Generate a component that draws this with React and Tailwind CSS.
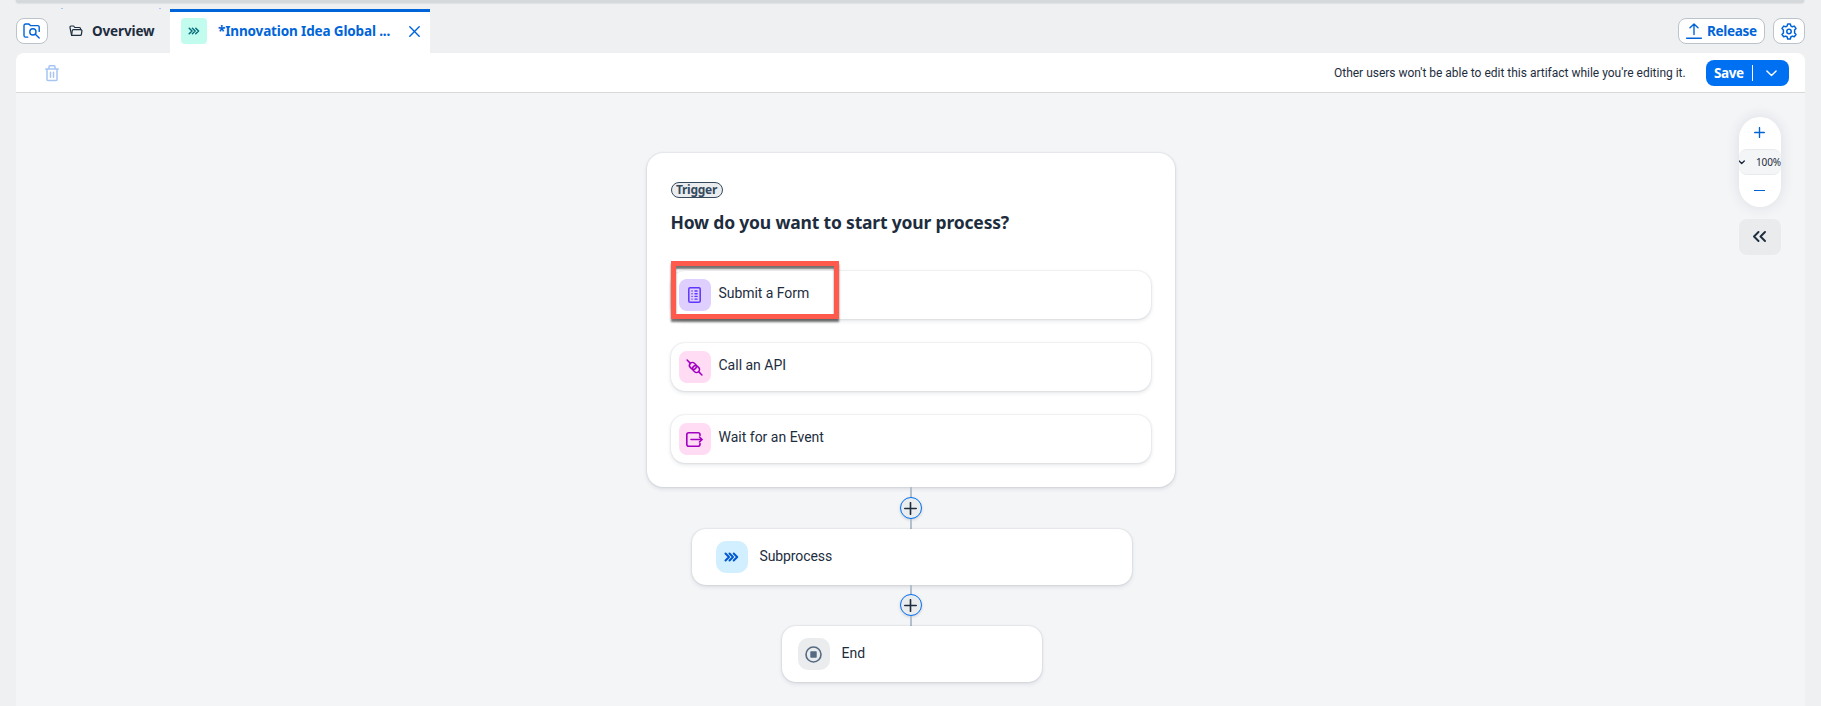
const stroke = {
  fill: "none",
  stroke: "currentColor",
  strokeLinecap: "round",
  strokeLinejoin: "round",
};

function FolderSearchIcon() {
  return (
    <svg width="18" height="18" viewBox="0 0 18 18" {...stroke} strokeWidth="1.4">
      <path d="M4.800 15.100H2.600a1.600 1.600 0 0 1-1.600-1.600V3.600A1.600 1.600 0 0 1 2.600 2h2.800c.6 0 1 .3 1.400.8l.6.8h7.200a1.600 1.600 0 0 1 1.600 1.600v4.200" />
      <circle cx="9.900" cy="9.900" r="3.100" />
      <path d="M12.300 12.200l3.900 3.900" />
    </svg>
  );
}

function FolderOpenIcon() {
  return (
    <svg width="14" height="12" viewBox="0 0 14 12" {...stroke} strokeWidth="1.200">
      <path d="M2.600 10.400L1 2.600C.9 1.600 1.300 1 2.200 1h2.400l1.200 1.500h4.600c.7 0 1.100.4 1.100 1.100v1" />
      <path d="M2.600 10.400l.6-4.600c.1-.7.5-1.100 1.200-1.100h7.400c.8 0 1.200.5 1.100 1.200l-.5 3.500c-.1.700-.5 1-1.200 1z" />
    </svg>
  );
}

function ChevronsIcon({ className, weight }) {
  return (
    <svg className={className} viewBox="0 0 15 10" {...stroke} strokeWidth={weight}>
      <path d="M1.500 1.500L5 5 1.500 8.500M5.500 1.500L9 5 5.500 8.500M9.700 1.500L13.200 5 9.700 8.500" />
    </svg>
  );
}

function TrashIcon() {
  return (
    <svg width="14" height="17" viewBox="0 0 14 17" {...stroke} strokeWidth="1.500">
      <path d="M.7 4h12.600M4 4V1.700c0-.6.300-.9.900-.9h4.200c.6 0 .9.300.9.900V4M2 4v10.400c0 .8.400 1.200 1.200 1.200h7.600c.8 0 1.200-.4 1.200-1.200V4M5.500 7.300v5M8.500 7.300v5" />
    </svg>
  );
}

function CloseIcon() {
  return (
    <svg width="11" height="11" viewBox="0 0 11 11" {...stroke} strokeWidth="1.400">
      <path d="M.8.8l9.400 9.400M10.200.8L.8 10.200" />
    </svg>
  );
}

function UploadIcon() {
  return (
    <svg width="16" height="16" viewBox="0 0 16 16" {...stroke} strokeWidth="1.400">
      <path d="M8 11.500V.9M4 4.800L8 .9l4 3.900" />
      <path d="M.7 15.200h14.600" strokeWidth="1.500" />
    </svg>
  );
}

function GearIcon() {
  return (
    <svg width="16" height="17" viewBox="0 0 16 17" {...stroke} strokeWidth="1.500">
      <path d="M6.700.9h2.600l.5 2 1.500.9 2-.7 1.700 2.300-1.400 1.600v2.900l1.400 1.600-1.700 2.300-2-.7-1.500.9-.5 2.100H6.700l-.5-2.100-1.500-.9-2 .7L1 11.500l1.400-1.600V7L1 5.400l1.700-2.300 2 .7 1.500-.9z" />
      <circle cx="8" cy="8.500" r="2.200" />
    </svg>
  );
}

function FormIcon() {
  return (
    <svg width="13" height="16" viewBox="0 0 13 16" {...stroke} strokeWidth="1.500">
      <rect x=".8" y=".8" width="11.400" height="14.400" rx="1.300" />
      <path d="M4 4h.1M4 6.700h.1M4 9.400h.1M4 12.100h.1M7 4h2.100M7 6.700h2.100M7 9.400h2.100M7 12.100h2.100" strokeWidth="1.400" />
    </svg>
  );
}

function ApiIcon() {
  return (
    <svg width="17" height="17" viewBox="0 0 17 17" {...stroke} strokeWidth="1.500">
      <g transform="translate(8.500 8.500) rotate(45)">
        <path d="M-10.500 0h4.700M5.800 0h4.700" />
        <rect x="-5.800" y="-2.900" width="7.200" height="5.800" rx="2.700" />
        <rect x="-1.400" y="-2.900" width="7.200" height="5.800" rx="2.700" />
      </g>
    </svg>
  );
}

function EventIcon() {
  return (
    <svg width="17" height="15" viewBox="0 0 17 15" {...stroke} strokeWidth="1.600">
      <path d="M14 3.400v-.6c0-1.300-.7-2-2-2H2.800c-1.300 0-2 .7-2 2v9.400c0 1.300.7 2 2 2H12c1.300 0 2-.7 2-2v-.6" />
      <path d="M5 7.500h11M13.500 5l2.600 2.500-2.600 2.500" />
    </svg>
  );
}

function StopIcon() {
  return (
    <svg width="17" height="17" viewBox="0 0 17 17">
      <circle cx="8.500" cy="8.500" r="7.500" fill="none" stroke="#556b82" strokeWidth="1.600" />
      <rect x="5.300" y="5.300" width="6.400" height="6.400" rx=".6" fill="#556b82" />
    </svg>
  );
}

function PlusIcon({ className }) {
  return (
    <svg className={className} viewBox="0 0 12 12" {...stroke} strokeWidth="1.500">
      <path d="M6 .7v10.600M.7 6h10.600" />
    </svg>
  );
}

function Connector({ className }) {
  return (
    <div className={`flex w-[22px] flex-col items-center ${className}`}>
      <div className="w-[2px] flex-1 bg-[#b2bfcc]" />
      <div className="flex size-[22px] shrink-0 items-center justify-center rounded-full border border-[#0070f2] bg-[#eaecee] text-[#1d2d3e] shadow-[0_1px_3px_rgba(34,53,72,0.2)]">
        <PlusIcon className="size-[13px]" />
      </div>
      <div className="h-[10px] w-[2px] bg-[#b2bfcc]" />
    </div>
  );
}

const cardShadow = "shadow-[0_0_2px_rgba(34,53,72,0.2),0_2px_4px_rgba(34,53,72,0.12)]";

function Option({ icon, tint, label, labelClass }) {
  return (
    <div className={`flex h-12 items-center rounded-[14px] bg-white pl-2 ${cardShadow}`}>
      <div className={`flex size-8 items-center justify-center rounded-lg ${tint}`}>{icon}</div>
      <span className={`mb-[3px] ml-[8px] text-[14px] ${labelClass}`}>{label}</span>
    </div>
  );
}

export default function App() {
  return (
    <div className="flex h-[706px] w-full flex-col overflow-hidden bg-[#eff0f2] px-4 font-['Roboto',sans-serif] text-[#1d2d3e]">
      <div className="mr-px h-[3px] shrink-0 rounded-b-md bg-[#d5d9dc] shadow-[0_0_2px_rgba(34,53,72,0.25)]" />

      <header className="relative flex h-[50px] shrink-0 items-end pt-[6px]">
        <span className="absolute left-[45px] top-[5px] h-px w-[2px] bg-[#a8c5ef]" />
        <span className="absolute left-[143px] top-[5px] h-px w-[2px] bg-[#a8c5ef]" />
        <button className="mb-[9px] flex h-[26px] w-8 items-center justify-center rounded-lg border border-[#bcc3ca] bg-white text-[#0064d9]">
          <FolderSearchIcon />
        </button>
        <div className="ml-[21px] flex h-[44px] w-[101px] items-center pb-[2px] pt-[2px] font-['Noto_Sans',sans-serif]">
          <FolderOpenIcon />
          <span className="ml-[9px] whitespace-nowrap text-[13.500px] font-bold tracking-[-0.14px]">Overview</span>
        </div>
        <div className="flex h-[44px] w-[260px] items-center border-t-[3px] border-[#0064d9] bg-white pb-[3px] pl-[11px] text-[#0064d9]">
          <div className="flex size-[26px] items-center justify-center rounded bg-[#c2fcee] text-[#046c7a]">
            <ChevronsIcon className="h-[8px] w-[12px]" weight="1.800" />
          </div>
          <span className="ml-[11px] w-[172px] whitespace-nowrap font-['Noto_Sans',sans-serif] text-[13.500px] font-bold tracking-[-0.14px]">
            *Innovation Idea Global ...
          </span>
          <span className="ml-[18.500px]">
            <CloseIcon />
          </span>
        </div>
        <div className="mb-[9px] ml-auto flex gap-2">
          <button className="flex h-[26px] w-[87px] items-center rounded-lg border border-[#bcc3ca] bg-white pl-[7px] text-[#0064d9]">
            <UploadIcon />
            <span className="ml-[5px] font-['Noto_Sans',sans-serif] text-[13.500px] font-bold tracking-[-0.3px]">Release</span>
          </button>
          <button className="flex h-[26px] w-8 items-center justify-center rounded-lg border border-[#bcc3ca] bg-white text-[#0064d9]">
            <GearIcon />
          </button>
        </div>
      </header>

      <div className="flex h-10 shrink-0 items-center rounded-t-lg border-b border-[#d9d9d9] bg-white pl-[29px] pr-4">
        <span className="pt-px text-[#a6c5f2]">
          <TrashIcon />
        </span>
        <span className="ml-auto w-[353px] whitespace-nowrap text-[12px] tracking-[-0.010px]">
          Other users won't be able to edit this artifact while you're editing it.
        </span>
        <button className="ml-[19px] mt-px flex h-[26px] w-[83px] items-center rounded-lg bg-[#0070f2] pl-2 text-white">
          <span className="w-[38px] text-left font-['Noto_Sans',sans-serif] text-[13.500px] font-bold tracking-[-0.4px]">Save</span>
          <span className="h-4 w-px bg-white" />
          <svg className="ml-[13px]" width="11" height="7" viewBox="0 0 11 7" {...stroke} strokeWidth="1.400">
            <path d="M.9.900l4.600 4.600L10.100.9" />
          </svg>
        </button>
      </div>

      <main className="relative flex flex-1 flex-col items-center bg-[#f4f5f7] pt-[60px]">
        <section className={`flex h-[334px] w-[528px] shrink-0 flex-col rounded-2xl bg-white px-6 pt-[29px] ${cardShadow}`}>
          <div className="flex h-4 w-[52px] items-center justify-center rounded-full border border-[#354a5f] bg-[#eaecee] font-['Noto_Sans',sans-serif] text-[12px] font-bold text-[#354a5f]">
            <span className="-mt-px tracking-[-0.280px]">Trigger</span>
          </div>
          <h1 className="mt-[11px] whitespace-nowrap font-['Noto_Sans',sans-serif] text-[17.500px] font-bold leading-[26px] tracking-[-0.180px]">
            How do you want to start your process?
          </h1>
          <div className="relative mt-[36px] flex flex-col gap-6">
            <Option icon={<FormIcon />} tint="bg-[#decfff] text-[#5d36ff]" label="Submit a Form" labelClass="tracking-[-0.050px]" />
            <Option icon={<ApiIcon />} tint="bg-[#ffdcf3] text-[#a100c2]" label="Call an API" labelClass="tracking-[0px]" />
            <Option icon={<EventIcon />} tint="bg-[#ffdcf3] text-[#a100c2]" label="Wait for an Event" labelClass="tracking-[0px]" />
            <div className="absolute -top-[10px] left-0 h-[58px] w-[168px] border-[5px] border-[#ff5a4b] shadow-[0_3px_2px_rgba(0,0,0,0.55),inset_0_3px_2px_rgba(0,0,0,0.55)]" />
          </div>
        </section>

        <Connector className="h-[42px]" />

        <section className={`ml-[2px] flex h-14 w-[440px] shrink-0 items-center rounded-[14px] bg-white pl-6 ${cardShadow}`}>
          <div className="flex size-8 items-center justify-center rounded-[10px] bg-[#d1efff] text-[#0057d2]">
            <ChevronsIcon className="h-[10px] w-[15px]" weight="2" />
          </div>
          <span className="mb-[2px] ml-3 text-[14px] tracking-[-0.100px]">Subprocess</span>
        </section>

        <Connector className="h-[41px]" />

        <section className={`ml-[2px] flex h-14 w-[260px] shrink-0 items-center rounded-[14px] bg-white pl-4 ${cardShadow}`}>
          <div className="flex size-8 items-center justify-center rounded-[10px] bg-[#eaecee]">
            <StopIcon />
          </div>
          <span className="mb-[2px] ml-3 text-[14px]">End</span>
        </section>

        <aside className="absolute right-6 top-6 flex w-[42px] flex-col gap-3">
          <div className="flex h-[90px] flex-col items-center overflow-hidden rounded-full bg-white shadow-[0_0_14px_rgba(34,53,72,0.12)]">
            <div className="flex h-8 items-center pb-px pr-px text-[#0064d9]">
              <PlusIcon className="size-[11px]" />
            </div>
            <div className="flex h-[26px] w-[42px] items-center rounded-lg border-y border-[#e8eaed] bg-[#f4f5f7]">
              <svg className="shrink-0" width="6" height="5" viewBox="0 0 6 5" {...stroke} strokeWidth="1.400">
                <path d="M.1.900l2.600 2.600L5.300.9" />
              </svg>
              <span className="ml-[11px] pt-px font-['Noto_Sans',sans-serif] text-[10px] tracking-[-0.1px]">100%</span>
            </div>
            <div className="flex h-[31px] items-center pr-px">
              <span className="h-[1.500px] w-[11px] bg-[#0064d9]" />
            </div>
          </div>
          <button className="flex h-9 w-[42px] items-center justify-center rounded-lg bg-[#eaebed] pb-px pr-px">
            <svg width="13" height="11" viewBox="0 0 13 11" {...stroke} strokeWidth="1.900">
              <path d="M5.500 1L1 5.500 5.500 10M12 1L7.500 5.500 12 10" />
            </svg>
          </button>
        </aside>
      </main>
    </div>
  );
}
